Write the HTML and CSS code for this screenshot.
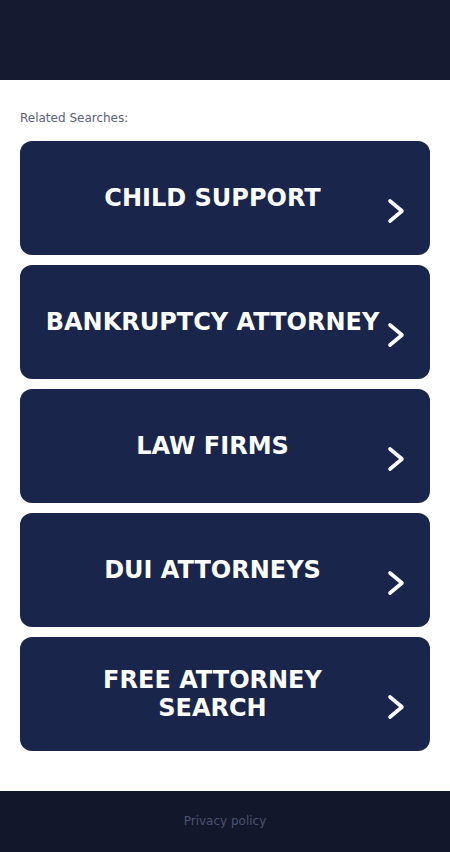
FILE: index.html
```html
<!DOCTYPE html>
<html>
<head>
<meta charset="utf-8">
<link rel="stylesheet" href="styles.css">
</head>
<body>
<header class="top"></header>
<main class="content">
  <p class="label">Related Searches:</p>
  <ul class="list">
    <li><a class="btn" href="#"><span class="txt">CHILD SUPPORT</span><svg class="chev" viewBox="0 0 18 26"><path d="M3 3 L15 13 L3 23" /></svg></a></li>
    <li><a class="btn" href="#"><span class="txt">BANKRUPTCY ATTORNEY</span><svg class="chev" viewBox="0 0 18 26"><path d="M3 3 L15 13 L3 23" /></svg></a></li>
    <li><a class="btn" href="#"><span class="txt">LAW FIRMS</span><svg class="chev" viewBox="0 0 18 26"><path d="M3 3 L15 13 L3 23" /></svg></a></li>
    <li><a class="btn" href="#"><span class="txt">DUI ATTORNEYS</span><svg class="chev" viewBox="0 0 18 26"><path d="M3 3 L15 13 L3 23" /></svg></a></li>
    <li><a class="btn" href="#"><span class="txt">FREE ATTORNEY<br>SEARCH</span><svg class="chev" viewBox="0 0 18 26"><path d="M3 3 L15 13 L3 23" /></svg></a></li>
  </ul>
</main>
<footer class="foot"><a href="#" class="privacy">Privacy policy</a></footer>
</body>
</html>
```
FILE: styles.css
```css
html, body { margin: 0; padding: 0; }
body { font-family: "DejaVu Sans", sans-serif; background: #fff; }
.top { height: 80px; background: #141a2f; }
.content { padding: 31px 20px 40px; }
.label { margin: 0 0 15px; font-size: 12px; line-height: 15px; color: #5a6078; }
.list { list-style: none; margin: 0; padding: 0; display: flex; flex-direction: column; gap: 10px; }
.btn { position: relative; display: flex; align-items: center; justify-content: center; height: 114px; box-sizing: border-box; padding: 0 45px 0 20px; background: #19254b; border-radius: 12px; text-decoration: none; }
.txt { color: #fff; font-weight: bold; font-size: 24px; line-height: 28px; text-align: center; }
.chev { position: absolute; left: 367px; top: 57px; width: 18px; height: 26px; }
.chev path { fill: none; stroke: #fff; stroke-width: 3.6; stroke-linecap: round; stroke-linejoin: round; }
.foot { height: 61px; background: #12172b; display: flex; align-items: center; justify-content: center; }
.privacy { font-size: 12px; color: #4b5370; text-decoration: none; margin-top: -1px; }
```
